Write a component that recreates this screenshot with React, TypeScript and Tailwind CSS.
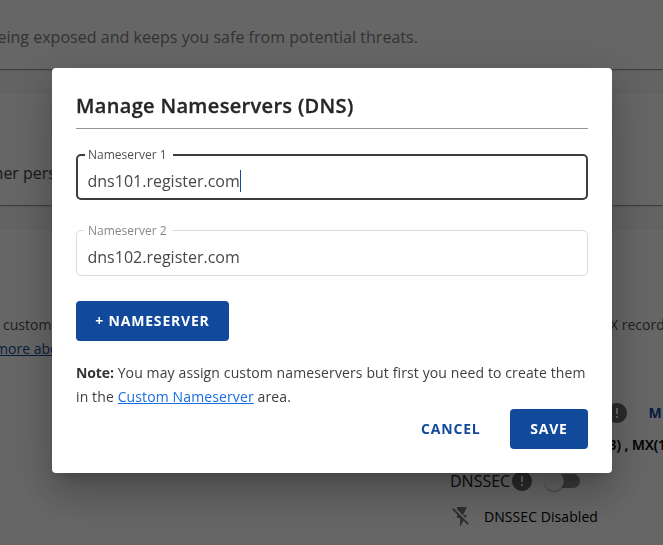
import type { ReactNode } from "react";

const cardShadow =
  "shadow-[0px_2px_1px_-1px_rgba(0,0,0,0.2),0px_1px_1px_0px_rgba(0,0,0,0.14),0px_1px_3px_0px_rgba(0,0,0,0.12)]";

function InfoIcon() {
  return (
    <svg viewBox="0 0 24 24" className="size-6 shrink-0 fill-[#6a6a6a]">
      <path d="M12 2C6.48 2 2 6.48 2 12s4.48 10 10 10 10-4.48 10-10S17.52 2 12 2zm1 15h-2v-2h2v2zm0-4h-2V7h2v6z" />
    </svg>
  );
}

function FlashOffIcon() {
  return (
    <svg viewBox="0 0 24 24" className="size-6 shrink-0 fill-[#757575]">
      <path d="M3.27 3 2 4.27l5 5V13h3v9l3.58-6.14L17.73 20 19 18.73 3.27 3zM17 10h-4l4-8H7v2.18l8.46 8.46L17 10z" />
    </svg>
  );
}

function Field({ label, value, focused }: { label: string; value: string; focused?: boolean }) {
  return (
    <div className="relative h-[46px] w-full">
      <div
        className={
          focused
            ? "flex h-full items-center rounded-[5px] border-2 border-[#3d3d3f] pt-2 pl-[9.5px]"
            : "flex h-full items-center rounded-[5px] border border-[#dcdcdc] pt-2 pl-[10.5px]"
        }
      >
        <span className="text-[16px] leading-6 text-[#484848]">{value}</span>
        {focused && <span className="ml-[0.5px] h-[22px] w-px bg-[#124a9b]" />}
      </div>
      <span
        className={
          focused
            ? "absolute -top-[7px] left-[9px] w-[88px] bg-white pl-[3px] text-[12px] leading-4 text-[#505050]"
            : "absolute -top-[7px] left-[8px] w-[88px] bg-white pl-1 text-[12px] leading-4 text-[#888]"
        }
      >
        {label}
      </span>
    </div>
  );
}

function Dialog({ children }: { children: ReactNode }) {
  return (
    <div className="fixed inset-0 flex items-start bg-black/60 pt-[68px] pl-[52px]">
      <div className="flex h-[405px] w-[560px] flex-col rounded bg-white px-6 pt-6 pb-6 shadow-[0px_11px_15px_-7px_rgba(0,0,0,0.2),0px_24px_38px_3px_rgba(0,0,0,0.14),0px_9px_46px_8px_rgba(0,0,0,0.12)]">
        {children}
      </div>
    </div>
  );
}

export default function App() {
  return (
    <div className="h-[545px] w-[663px] overflow-hidden bg-[#f7f7f7] font-['Open_Sans','Noto_Sans',sans-serif]">
      <section className={`h-[69px] bg-white pt-[25px] ${cardShadow}`}>
        <div className="flex w-[418px] justify-end text-[16px] leading-6 whitespace-nowrap text-[#808080]">
          <span className="tracking-[0.03px]">eing exposed and keeps you safe from potential threats.</span>
        </div>
      </section>

      <section className={`mt-6 h-[112px] bg-white pt-[68px] ${cardShadow}`}>
        <div className="flex w-[56px] justify-end text-[16px] leading-6 whitespace-nowrap text-[#404040]">
          her pers
        </div>
      </section>

      <section className={`mt-6 h-[340px] bg-white pt-[84px] ${cardShadow}`}>
        <div className="flex justify-between text-[14px] leading-6 whitespace-nowrap text-[#505050]">
          <span className="pl-[3px]">custom</span>
          <span className="w-[53px]">X record</span>
        </div>
        <div className="flex w-[72px] justify-end text-[14px] leading-6 whitespace-nowrap text-[#124a9b] underline">
          more about
        </div>
        <div className="mt-10 flex h-6 items-center pl-[605px]">
          <InfoIcon />
          <span className="-mt-[2px] pl-[19.5px] text-[14px] font-bold tracking-[1px] text-[#124a9b]">MA</span>
        </div>
        <div className="mt-2 pl-[608.5px] text-[14px] leading-6 font-semibold whitespace-nowrap text-black [-webkit-text-stroke:0.2px]">
          3) , MX(1
        </div>
        <div className="mt-3 flex h-6 items-center pl-[450px]">
          <span className="w-[60px] text-[16px] leading-6 text-[#202020]">DNSSEC</span>
          <InfoIcon />
          <div className="ml-3 flex h-[14px] w-[34px] items-center rounded-full bg-[#8e8e8e]">
            <span className="-ml-[2px] size-5 shrink-0 rounded-full bg-[#fafafa] shadow-[0px_2px_1px_-1px_rgba(0,0,0,0.2),0px_1px_1px_0px_rgba(0,0,0,0.14),0px_1px_3px_0px_rgba(0,0,0,0.12)]" />
          </div>
        </div>
        <div className="mt-3 flex h-6 items-center pl-[450px]">
          <FlashOffIcon />
          <span className="pl-[10px] text-[14px] leading-6 tracking-[0.07px] text-black">DNSSEC Disabled</span>
        </div>
      </section>

      <Dialog>
        <h2 className="h-[37px] border-b border-[#949494] text-[20px] leading-7 font-semibold tracking-[0.33px] text-[#262626] [-webkit-text-stroke:0.3px]">
          Manage Nameservers (DNS)
        </h2>
        <div className="mt-[25px] flex flex-col gap-[30px]">
          <Field label="Nameserver 1" value="dns101.register.com" focused />
          <Field label="Nameserver 2" value="dns102.register.com" />
        </div>
        <button className="mt-[25px] h-10 w-[153px] shrink-0 rounded bg-[#124a9b] pb-[2px] text-[14px] font-bold tracking-[0.8px] text-white">
          + NAMESERVER
        </button>
        <p className="mt-5 text-[14px] leading-6 tracking-[0.12px] whitespace-nowrap text-[#404040]">
          <b className="font-bold tracking-[-0.1px] text-[#333]">Note:</b> You may assign custom nameservers but first you need to create them
          <br />
          in the <a className="text-[#1a6fe0] underline">Custom Nameserver</a> area.
        </p>
        <div className="flex justify-end gap-[29.5px]">
          <button className="h-10 pb-[2px] text-[14px] font-bold tracking-[0.8px] text-[#124a9b]">CANCEL</button>
          <button className="h-10 w-[78px] rounded bg-[#124a9b] pb-[2px] text-[14px] font-bold tracking-[0.8px] text-white">
            SAVE
          </button>
        </div>
      </Dialog>
    </div>
  );
}
